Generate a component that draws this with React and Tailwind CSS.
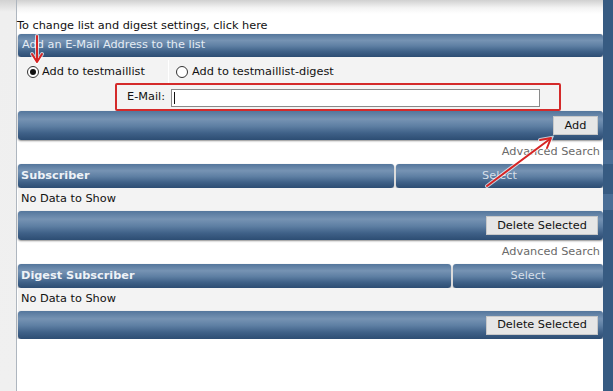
import React from 'react'

const bar =
  'bg-[linear-gradient(to_bottom,#54769c_0%,#7693b3_28%,#5e7fa3_52%,#3f6188_76%,#2d4d73_100%)] shadow-[0_1px_2px_rgba(0,0,0,0.45)] rounded-[3px]'

function Radio({ checked }) {
  return (
    <span className="inline-flex items-center justify-center w-[12px] h-[12px] rounded-full border border-[#333] bg-white mr-[2px]">
      {checked && <span className="w-[6px] h-[6px] rounded-full bg-[#111]"></span>}
    </span>
  )
}

function GrayButton({ children, className = '' }) {
  return (
    <button className={`h-[19px] bg-[#e6e6e6] border border-[#c8c8c8] text-[#111] text-[11.3px] leading-none ${className}`}>
      {children}
    </button>
  )
}

function ActionBar({ label, btnWidth, h }) {
  return (
    <div className={`${bar} ${h} ml-[1px] flex items-center justify-end pr-[5px]`}>
      <GrayButton className={btnWidth}>{label}</GrayButton>
    </div>
  )
}

export default function App() {
  return (
    <div className="relative w-[613px] h-[391px] overflow-hidden flex bg-white font-['DejaVu_Sans',sans-serif] text-[11.3px] text-[#111]">
      {/* left strip */}
      <div className="w-[17px] bg-[linear-gradient(to_bottom,#d2d2d2_0px,#efefef_12px,#f0f0f0_100%)] border-r border-[#aeb6bf]"></div>

      {/* main panel */}
      <div className="flex-1 flex flex-col bg-white">
        <div className="h-[17px] bg-[linear-gradient(to_bottom,#d0d0d0_0px,#f4f4f4_8px,#ffffff_14px)]"></div>
        <div className="h-[17px] leading-[14px] pt-[2px]">To change list and digest settings, click here</div>

        {/* add email */}
        <div className={`${bar} h-[23px] ml-[1px] flex items-center pl-[4px] text-[#e4ecf4]`}>
          Add an E-Mail Address to the list
        </div>
        <div className="h-[27px] bg-[#f3f3f3] flex items-center ml-[1px] pt-[3px]">
          <div className="w-[151px] pl-[9px] flex items-center h-full border-r border-[#ffffff]">
            <Radio checked />
            <span className="ml-[1px]">Add to testmaillist</span>
          </div>
          <div className="pl-[7px] flex items-center">
            <Radio />
            <span className="ml-[2px]">Add to testmaillist-digest</span>
          </div>
        </div>
        <div className="h-[27px] bg-[#f3f3f3] flex items-center ml-[1px]">
          <div className="w-[153px] text-right pr-[6px]">E-Mail:</div>
          <div className="w-[369px] h-[18px] border border-[#8a8a8a] bg-white flex items-center pl-[2px]">
            <span className="w-[1px] h-[12px] bg-[#111]"></span>
          </div>
        </div>
        <ActionBar label="Add" btnWidth="w-[45px]" h="h-[29px]" />

        <div className="h-[24px] flex items-center justify-end pr-[3px] text-[#6a6a6a]">Advanced Search</div>

        {/* subscriber */}
        <div className="h-[24px] ml-[1px] flex gap-[2px]">
          <div className={`${bar} w-[376px] flex items-center pl-[3px] font-bold text-[#eef2f7]`}>Subscriber</div>
          <div className={`${bar} flex-1 flex items-center justify-center text-[#d6dfe9]`}>Select</div>
        </div>
        <div className="h-[23px] bg-[#f3f3f3] ml-[1px] flex items-center pl-[3px]">No Data to Show</div>
        <ActionBar label="Delete Selected" btnWidth="w-[112px]" h="h-[29px]" />

        <div className="h-[24px] flex items-center justify-end pr-[3px] text-[#6a6a6a]">Advanced Search</div>

        {/* digest subscriber */}
        <div className="h-[24px] ml-[1px] flex gap-[2px]">
          <div className={`${bar} w-[433px] flex items-center pl-[3px] font-bold text-[#eef2f7]`}>Digest Subscriber</div>
          <div className={`${bar} flex-1 flex items-center justify-center text-[#d6dfe9]`}>Select</div>
        </div>
        <div className="h-[23px] bg-[#f3f3f3] ml-[1px] flex items-center pl-[3px]">No Data to Show</div>
        <ActionBar label="Delete Selected" btnWidth="w-[112px]" h="h-[28px]" />
        <div className="flex-1 bg-white"></div>
      </div>

      {/* right strip */}
      <div className="w-[10px] bg-[#375b82] flex flex-col">
        <div className="h-[150px]"></div>
        <div className="h-[14px] bg-[#4a6e96]"></div>
        <div className="h-[30px]"></div>
        <div className="h-[16px] bg-[#4a6e96]"></div>
      </div>

      {/* annotation: red box */}
      <div className="absolute left-[115px] top-[83px] w-[446px] h-[28px] border-2 border-[#d42a2a] rounded-[2px] pointer-events-none"></div>

      {/* annotation arrows */}
      <svg className="absolute left-0 top-0 pointer-events-none" width="613" height="391">
        <g stroke="#ffffff" strokeWidth="4" fill="none" strokeLinecap="round" opacity="0.7">
          <line x1="37" y1="36" x2="37" y2="61" />
          <polyline points="32,54 37,62 42,54" />
          <line x1="487" y1="186" x2="550" y2="139" />
          <polyline points="540,140 551,138 547,148" />
        </g>
        <g stroke="#d62424" strokeWidth="2" fill="none" strokeLinecap="round" strokeLinejoin="round">
          <line x1="37" y1="36" x2="37" y2="61" />
          <polyline points="32,54 37,62 42,54" />
          <line x1="487" y1="186" x2="550" y2="139" />
          <polyline points="540,140 551,138 547,148" />
        </g>
      </svg>
    </div>
  )
}
